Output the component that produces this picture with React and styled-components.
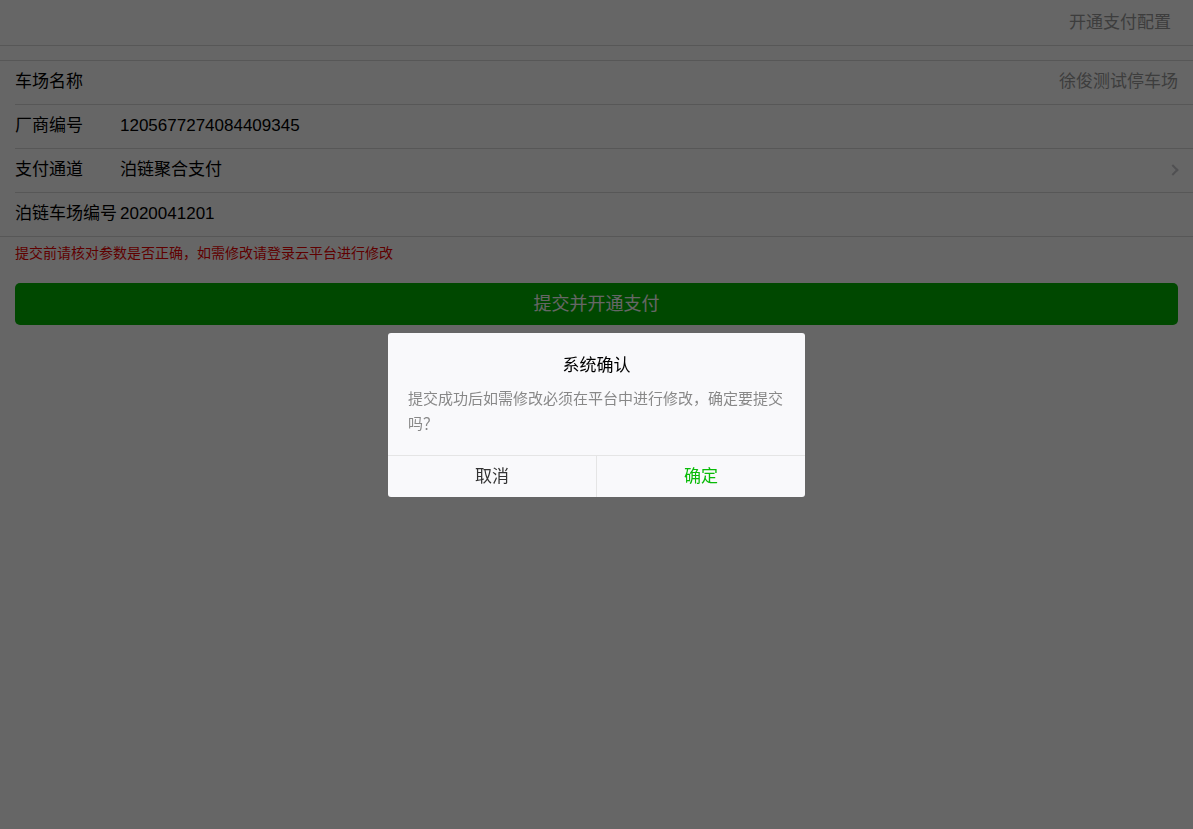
import React from 'react';
import styled, { createGlobalStyle } from 'styled-components';

const GlobalStyle = createGlobalStyle`
  html, body {
    margin: 0;
    padding: 0;
    background: #ffffff;
    font-family: "Liberation Sans", "Noto Sans CJK SC", sans-serif;
  }
`;

const Page = styled.div`
  min-height: 829px;
  background: #ffffff;
`;

const Header = styled.div`
  height: 45px;
  display: flex;
  align-items: center;
  justify-content: flex-end;
  padding: 0 22px 0 15px;
  border-bottom: 1px solid #d9d9d9;
  font-size: 17px;
  line-height: 24px;
  color: #999;
`;

const Cells = styled.div`
  margin-top: 14px;
  border-top: 1px solid #d9d9d9;
  border-bottom: 1px solid #d9d9d9;
`;

const Cell = styled.div`
  height: 43px;
  box-sizing: border-box;
  display: flex;
  align-items: baseline;
  padding: 9px 15px 0;
  font-size: 17px;
  line-height: 24px;
  color: #000;
  & + & {
    height: 44px;
    border-top: 1px solid #d9d9d9;
    margin-left: 15px;
    padding-left: 0;
  }
`;

const Label = styled.div`
  width: 105px;
  flex-shrink: 0;
  white-space: nowrap;
`;

const Value = styled.div`
  flex: 1;
  text-align: ${p => (p.$right ? 'right' : 'left')};
  color: ${p => (p.$muted ? '#999' : '#000')};
`;

const Chevron = styled.span`
  align-self: center;
  width: 6px;
  height: 6px;
  border-top: 2px solid #c8c8cd;
  border-right: 2px solid #c8c8cd;
  transform: rotate(45deg);
  margin: 0 1px 10px 0;
`;

const Tip = styled.div`
  padding: 7px 15px 0;
  font-size: 14px;
  line-height: 18px;
  color: #e00;
`;

const SubmitButton = styled.button`
  display: block;
  width: calc(100% - 30px);
  margin: 21px 15px 0;
  height: 42px;
  padding: 0 0 4px;
  border: none;
  border-radius: 5px;
  background: #00b400;
  color: #fff;
  font-family: "Noto Sans CJK SC", sans-serif;
  font-size: 18px;
`;

const Mask = styled.div`
  position: fixed;
  inset: 0;
  background: rgba(0, 0, 0, 0.6);
`;

const Dialog = styled.div`
  position: fixed;
  left: 388px;
  top: 333px;
  width: 417px;
  background: #f9f9fb;
  border-radius: 3px;
  overflow: hidden;
  text-align: center;
`;

const DialogTitle = styled.div`
  padding-top: 21px;
  font-size: 17px;
  line-height: 24px;
  color: #000;
`;

const DialogBody = styled.div`
  padding: 7px 20px 20px;
  font-size: 15px;
  line-height: 25px;
  color: #888;
  text-align: left;
  font-family: "Noto Sans CJK SC", sans-serif;
`;

const DialogFooter = styled.div`
  display: flex;
  border-top: 1px solid #e5e5e5;
  height: 41px;
`;

const DialogButton = styled.div`
  flex: 1;
  display: flex;
  align-items: center;
  justify-content: center;
  padding-bottom: 4px;
  font-size: 17px;
  color: ${p => (p.$primary ? '#09bb07' : '#333')};
  & + & {
    border-left: 1px solid #e5e5e5;
  }
`;

export default function App() {
  return (
    <>
      <GlobalStyle />
      <Page>
        <Header>开通支付配置</Header>
        <Cells>
          <Cell>
            <Label>车场名称</Label>
            <Value $right $muted>徐俊测试停车场</Value>
          </Cell>
          <Cell>
            <Label>厂商编号</Label>
            <Value>1205677274084409345</Value>
          </Cell>
          <Cell style={{ paddingRight: 15 }}>
            <Label>支付通道</Label>
            <Value>泊链聚合支付</Value>
            <Chevron />
          </Cell>
          <Cell>
            <Label>泊链车场编号</Label>
            <Value>2020041201</Value>
          </Cell>
        </Cells>
        <Tip>提交前请核对参数是否正确，如需修改请登录云平台进行修改</Tip>
        <SubmitButton>提交并开通支付</SubmitButton>
      </Page>
      <Mask />
      <Dialog>
        <DialogTitle>系统确认</DialogTitle>
        <DialogBody>提交成功后如需修改必须在平台中进行修改，确定要提交吗？</DialogBody>
        <DialogFooter>
          <DialogButton>取消</DialogButton>
          <DialogButton $primary>确定</DialogButton>
        </DialogFooter>
      </Dialog>
    </>
  );
}
